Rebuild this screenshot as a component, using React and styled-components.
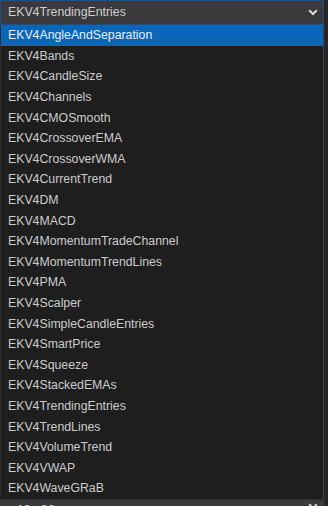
import React from 'react';
import styled, { createGlobalStyle } from 'styled-components';

const options = [
  'EKV4AngleAndSeparation',
  'EKV4Bands',
  'EKV4CandleSize',
  'EKV4Channels',
  'EKV4CMOSmooth',
  'EKV4CrossoverEMA',
  'EKV4CrossoverWMA',
  'EKV4CurrentTrend',
  'EKV4DM',
  'EKV4MACD',
  'EKV4MomentumTradeChannel',
  'EKV4MomentumTrendLines',
  'EKV4PMA',
  'EKV4Scalper',
  'EKV4SimpleCandleEntries',
  'EKV4SmartPrice',
  'EKV4Squeeze',
  'EKV4StackedEMAs',
  'EKV4TrendingEntries',
  'EKV4TrendLines',
  'EKV4VolumeTrend',
  'EKV4VWAP',
  'EKV4WaveGRaB',
];

function Chevron() {
  return (
    <svg width="10" height="7" viewBox="0 0 10 7">
      <path d="M1.2 1.2 L5 5 L8.8 1.2" fill="none" stroke="#dcdcdc" strokeWidth="2" />
    </svg>
  );
}

export default function App() {
  return (
    <>
      <GlobalStyle />
      <Panel>
        <Select $focused>
          <span>EKV4TrendingEntries</span>
          <Chevron />
        </Select>
        <List>
          {options.map((name, i) => (
            <Item key={name} $active={i === 0}>{name}</Item>
          ))}
        </List>
        <Select $peek>
          <span>13 : 30</span>
          <Chevron />
        </Select>
      </Panel>
    </>
  );
}

const GlobalStyle = createGlobalStyle`
  html, body {
    margin: 0;
    background: #262628;
    overflow: hidden;
  }
  body {
    font-family: "Liberation Sans", Arial, sans-serif;
  }
`;

const Panel = styled.div`
  width: 324px;
  height: 506px;
  display: flex;
  flex-direction: column;
`;

const Select = styled.div`
  height: 25px;
  flex-shrink: 0;
  box-sizing: border-box;
  display: flex;
  align-items: ${(p) => (p.$peek ? 'flex-start' : 'center')};
  justify-content: space-between;
  padding: ${(p) => (p.$peek ? '2px 5px 0 16px' : '0 5px 0 7px')};
  background: #3a3a3c;
  border: 1px solid ${(p) => (p.$focused ? '#1d4f82' : '#3a3a3c')};
  color: #cfcfcf;
  font-size: 12.3px;

  span {
    padding-bottom: 1px;
  }
`;

const List = styled.div`
  display: flex;
  flex-direction: column;
  background: #1e1e1e;
  border-left: 1px solid #2c2c2e;
  border-right: 1px solid #454547;
  border-bottom: 1px solid #2c2c2e;
`;

const Item = styled.div`
  height: 20.6px;
  display: flex;
  align-items: center;
  padding-left: 7px;
  font-size: 12.3px;
  color: ${(p) => (p.$active ? '#e8eef6' : '#cccccc')};
  background: ${(p) => (p.$active ? '#0a66b8' : 'transparent')};
  white-space: nowrap;
`;
